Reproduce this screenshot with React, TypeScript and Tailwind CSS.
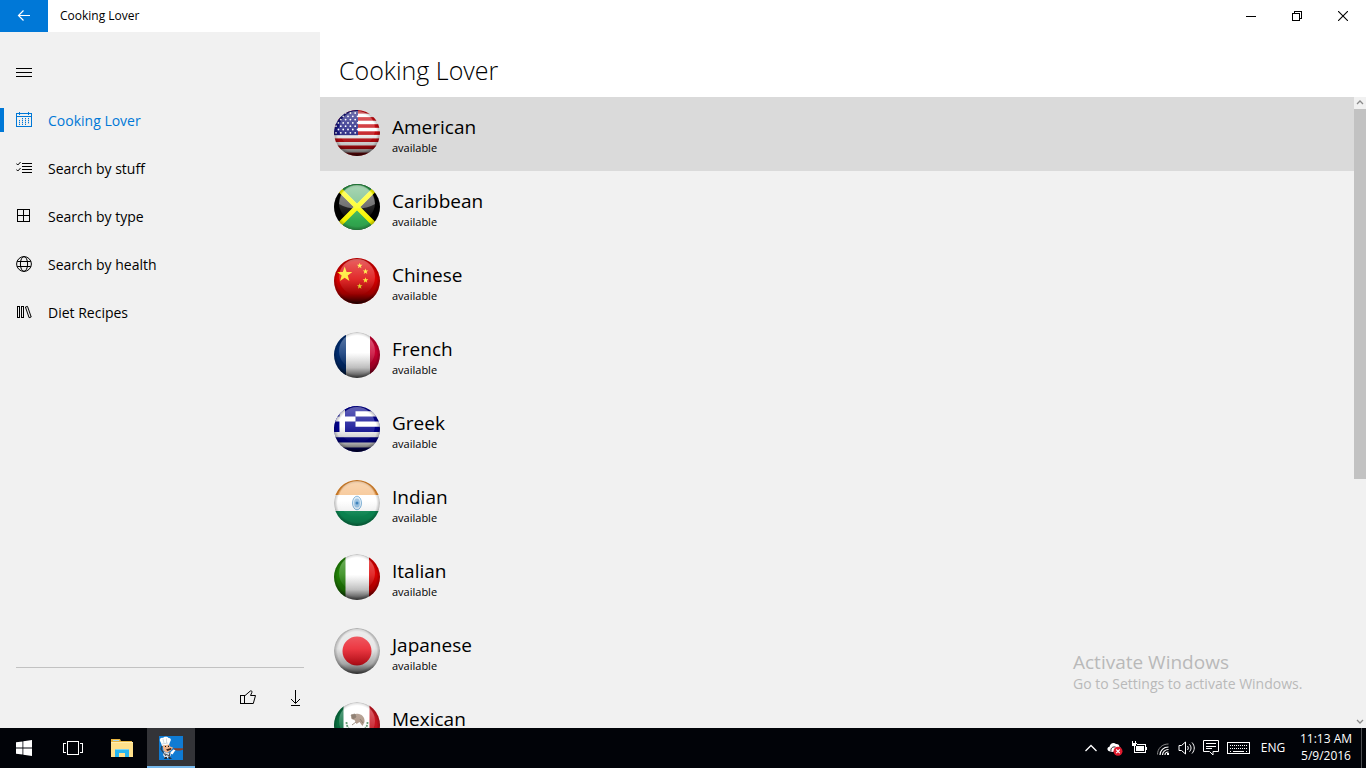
import React, { useState } from 'react';

const navItems = [
  { id: 'home', label: 'Cooking Lover', icon: CalendarIcon },
  { id: 'stuff', label: 'Search by stuff', icon: ChecklistIcon },
  { id: 'type', label: 'Search by type', icon: GridIcon },
  { id: 'health', label: 'Search by health', icon: GlobeIcon },
  { id: 'diet', label: 'Diet Recipes', icon: BooksIcon },
];

const cuisines = [
  { name: 'American', status: 'available', flag: UsaFlag },
  { name: 'Caribbean', status: 'available', flag: JamaicaFlag },
  { name: 'Chinese', status: 'available', flag: ChinaFlag },
  { name: 'French', status: 'available', flag: FranceFlag },
  { name: 'Greek', status: 'available', flag: GreeceFlag },
  { name: 'Indian', status: 'available', flag: IndiaFlag },
  { name: 'Italian', status: 'available', flag: ItalyFlag },
  { name: 'Japanese', status: 'available', flag: JapanFlag },
  { name: 'Mexican', status: 'available', flag: MexicoFlag },
];

/* ---------- Sidebar icons ---------- */

function CalendarIcon() {
  return (
    <svg className="w-4 h-4" viewBox="0 0 16 16" fill="none" stroke="currentColor" shapeRendering="crispEdges">
      <path d="M.5 1.5h15v13H.5zM.5 4.5h15M3.5 0v3M12.5 0v3" />
      <path d="M6 6.5h7M3 8.5h10M3 10.5h10M3 12.5h7" strokeDasharray="1 2" />
      <path d="M6 7.5h7M3 9.5h10M3 11.5h10" strokeDasharray="1 2" opacity="0.3" />
    </svg>
  );
}

function ChecklistIcon() {
  return (
    <svg className="w-4 h-4" viewBox="0 0 16 16" fill="none" stroke="currentColor">
      <path d="M6 3.5h10M6 6.5h10M6 9.5h10M6 12.5h10" shapeRendering="crispEdges" />
      <path d="M.3 3.5l1.5 1.500L4.600 2M.3 9.500l1.500 1.500L4.600 8" />
    </svg>
  );
}

function GridIcon() {
  return (
    <svg className="w-4 h-4" viewBox="0 0 16 16" fill="none" stroke="currentColor" shapeRendering="crispEdges">
      <path d="M1.5 1.5h12v12h-12zM7.5 1.5v12M1.5 7.5h12" />
    </svg>
  );
}

function GlobeIcon() {
  return (
    <svg className="w-4 h-4" viewBox="0 0 16 16" fill="none" stroke="currentColor">
      <circle cx="8" cy="8" r="7.4" />
      <ellipse cx="8" cy="8" rx="3.6" ry="7.4" />
      <path d="M1.2 5.5h13.6M1.2 10.5h13.6" />
    </svg>
  );
}

function BooksIcon() {
  return (
    <svg className="w-4 h-4" viewBox="0 0 16 16" fill="none" stroke="currentColor">
      <path d="M1.5 2.5h2v11h-2zM5.5 2.5h2v11h-2z" shapeRendering="crispEdges" />
      <path d="M9.4 3l2.1-.6 3.7 10.6-2.1.7z" />
    </svg>
  );
}

/* ---------- Flags ---------- */

function FlagBall({ id, shade = 0.75, children }: { id: string; shade?: number; children: React.ReactNode }) {
  return (
    <svg className="w-[46px] h-[46px] shrink-0" viewBox="0 0 46 46" aria-hidden="true">
      <defs>
        <clipPath id={`${id}-clip`}>
          <circle cx="23" cy="23" r="23" />
        </clipPath>
        <linearGradient id={`${id}-dark`} x1="0" y1="0" x2="0" y2="1">
          <stop offset="0.45" stopColor="#000" stopOpacity="0" />
          <stop offset="0.78" stopColor="#000" stopOpacity={shade * 0.35} />
          <stop offset="1" stopColor="#000" stopOpacity={shade} />
        </linearGradient>
        <radialGradient id={`${id}-edge`}>
          <stop offset="0.84" stopColor="#000" stopOpacity="0" />
          <stop offset="1" stopColor="#000" stopOpacity="0.26" />
        </radialGradient>
        <linearGradient id={`${id}-gloss`} x1="0" y1="0" x2="0" y2="1">
          <stop offset="0" stopColor="#fff" stopOpacity="0.38" />
          <stop offset="1" stopColor="#fff" stopOpacity="0" />
        </linearGradient>
      </defs>
      <g clipPath={`url(#${id}-clip)`}>
        {children}
        <rect width="46" height="46" fill={`url(#${id}-dark)`} />
        <circle cx="23" cy="23" r="23" fill={`url(#${id}-edge)`} />
        <ellipse cx="23" cy="19" rx="18" ry="18" fill={`url(#${id}-gloss)`} />
      </g>
    </svg>
  );
}

// Five-pointed star centred on cx, cy
function star(cx: number, cy: number, r: number) {
  return Array.from({ length: 10 }, (_, i) => {
    const radius = i % 2 === 0 ? r : r * 0.4;
    const angle = (Math.PI / 5) * i - Math.PI / 2;
    return `${(cx + radius * Math.cos(angle)).toFixed(2)},${(cy + radius * Math.sin(angle)).toFixed(2)}`;
  }).join(' ');
}

function UsaFlag() {
  return (
    <FlagBall id="usa">
      <rect width="46" height="46" fill="#fff" />
      {[0, 1, 2, 3, 4, 5, 6].map((i) => (
        <rect key={i} y={i * 7.1} width="46" height="3.6" fill="#c80a10" />
      ))}
      <rect width="24" height="25.2" fill="#16167c" />
      {[0, 1, 2, 3, 4, 5, 6].map((row) =>
        [0, 1, 2, 3, 4].map((col) => (
          <circle key={`${row}-${col}`} cx={2 + col * 4.8 + (row % 2) * 2.4} cy={3 + row * 3.3} r="0.9" fill="#fff" />
        ))
      )}
    </FlagBall>
  );
}

function JamaicaFlag() {
  return (
    <FlagBall id="jamaica" shade={0.15}>
      <rect width="46" height="46" fill="#000" />
      <path d="M0 0h46L23 23z" fill="#2a9a47" />
      <path d="M0 46h46L23 23z" fill="#35b455" />
      <path d="M3 3l40 40M43 3L3 43" stroke="#ff0" strokeWidth="4.6" />
      <path d="M5 20C6 8 14 1.500 23 1.500s17 6.500 18 18.500c-10 6-26 6-36 0z" fill="#fff" fillOpacity="0.35" />
      <path d="M6 6l34 34M40 6L6 40" stroke="#ff0" strokeWidth="4" strokeOpacity="0.7" />
    </FlagBall>
  );
}

function ChinaFlag() {
  return (
    <FlagBall id="china" shade={0.85}>
      <rect width="46" height="46" fill="#dc0000" />
      <polygon points={star(10.7, 16.5, 8)} fill="#ffe81c" />
      <polygon points={star(25.7, 7.8, 3)} fill="#ffe81c" />
      <polygon points={star(31.5, 13.5, 3)} fill="#ffe81c" />
      <polygon points={star(31.5, 22.3, 3)} fill="#ffe81c" />
      <polygon points={star(25.7, 28.2, 3)} fill="#ffe81c" />
    </FlagBall>
  );
}

function FranceFlag() {
  return (
    <FlagBall id="france">
      <rect width="46" height="46" fill="#fff" />
      <rect width="12" height="46" fill="#002d72" />
      <rect x="36" width="10" height="46" fill="#c8002f" />
    </FlagBall>
  );
}

function GreeceFlag() {
  return (
    <FlagBall id="greece">
      <rect width="46" height="46" fill="#00008f" />
      <path d="M0 5.2h46v5.2H0zM0 15.6h46v5.2H0zM0 26h46v5.2H0zM0 36.4h46v5.2H0z" fill="#fff" />
      <rect width="21.5" height="26" fill="#00008f" />
      <path d="M0 10.4h21.5v5.2H0zM5.5 0H11v26H5.5z" fill="#fff" />
    </FlagBall>
  );
}

function IndiaFlag() {
  return (
    <FlagBall id="india" shade={0.25}>
      <rect width="46" height="46" fill="#fff" />
      <rect width="46" height="15" fill="#ee9030" />
      <path d="M4 15C7 5 15 1.5 23 1.5S39 5 42 15z" fill="#fff" fillOpacity="0.4" />
      <rect y="31" width="46" height="15" fill="#0c8c55" />
      <ellipse cx="23" cy="23" rx="4.5" ry="6.8" fill="#d9e9f5" stroke="#4f94c8" strokeWidth="0.8" />
      <ellipse cx="23" cy="23" rx="2.9" ry="4.6" fill="#8ab9de" />
      <circle cx="23" cy="23" r="1.5" fill="#1f6fb2" />
    </FlagBall>
  );
}

function ItalyFlag() {
  return (
    <FlagBall id="italy">
      <rect width="46" height="46" fill="#fff" />
      <rect width="11.5" height="46" fill="#218306" />
      <rect x="35" width="11" height="46" fill="#dc0000" />
    </FlagBall>
  );
}

function JapanFlag() {
  return (
    <FlagBall id="japan">
      <rect width="46" height="46" fill="#e2e2e2" />
      <circle cx="23" cy="23" r="14.5" fill="#e8101c" />
    </FlagBall>
  );
}

function MexicoFlag() {
  return (
    <FlagBall id="mexico" shade={0.3}>
      <rect width="46" height="46" fill="#fff" />
      <rect width="9.5" height="46" fill="#087040" />
      <rect x="35.5" width="11" height="46" fill="#c81420" />
      <path d="M17 15c2-3 5-4 8-3 4 1 6 4 5.500 8l-2 4-3-4-3 2-2-4-3-1z" fill="#a08674" />
      <path d="M17 13l4-1 1 3-3 2zM26 17l3 4M22 20l-4 3" fill="#6d5a4a" stroke="#6d5a4a" strokeWidth="0.8" />
      <path d="M12.500 20c0 6 4 9.500 10.500 9.500S33.500 26 33.500 20" fill="none" stroke="#4e8a5e" strokeWidth="1.800" strokeDasharray="2 1" />
    </FlagBall>
  );
}

/* ---------- Window ---------- */

function TitleBar() {
  return (
    <header className="flex h-8 shrink-0 items-center bg-white">
      <button type="button" aria-label="Back" className="flex h-8 w-12 items-center justify-center bg-[#0078d7] text-white">
        <svg className="w-4 h-4" viewBox="0 0 16 16" fill="none" stroke="currentColor" strokeWidth="1.2">
          <path d="M14 7.500H2.500M7.500 2.500l-5 5 5 5" />
        </svg>
      </button>
      <span className="ml-3 text-[12px] leading-4">Cooking Lover</span>
      <div className="ml-auto flex">
        <button type="button" aria-label="Minimize" className="flex h-8 w-[46px] items-center justify-center">
          <svg className="w-[10px] h-[10px]" viewBox="0 0 10 10" stroke="currentColor" shapeRendering="crispEdges">
            <path d="M0 5.500h10" />
          </svg>
        </button>
        <button type="button" aria-label="Restore" className="flex h-8 w-[46px] items-center justify-center">
          <svg className="w-[10px] h-[10px]" viewBox="0 0 10 10" fill="none" stroke="currentColor" shapeRendering="crispEdges">
            <path d="M.5 2.500h7v7h-7zM2.500 2.500v-2h7v7h-2" />
          </svg>
        </button>
        <button type="button" aria-label="Close" className="flex h-8 w-[46px] items-center justify-center">
          <svg className="w-[10px] h-[10px]" viewBox="0 0 10 10" stroke="currentColor" strokeWidth="1.1">
            <path d="M0 0l10 10M10 0L0 10" />
          </svg>
        </button>
      </div>
    </header>
  );
}

function Sidebar() {
  const [active, setActive] = useState('home');

  return (
    <aside className="flex w-80 shrink-0 flex-col bg-[#f1f1f1] pt-4">
      <button type="button" aria-label="Menu" className="flex h-12 w-12 items-center justify-center">
        <svg className="w-4 h-4" viewBox="0 0 16 16" stroke="currentColor" shapeRendering="crispEdges">
          <path d="M0 4.500h16M0 8.500h16M0 12.500h16" />
        </svg>
      </button>
      <nav>
        {navItems.map(({ id, label, icon: Icon }) => (
          <a
            key={id}
            href={`#${id}`}
            onClick={() => setActive(id)}
            className={`relative flex h-12 items-center gap-4 px-4 text-[14px] ${active === id ? 'text-[#0078d7]' : 'text-black'}`}
          >
            {active === id && <span className="absolute left-0 h-6 w-1 bg-[#0078d7]" />}
            <Icon />
            <span>{label}</span>
          </a>
        ))}
      </nav>
      <div className="mx-4 mt-auto flex h-[61px] items-center justify-end border-t border-[#c2c2c2]">
        <button type="button" aria-label="Like" className="flex h-12 w-12 items-center justify-center">
          <svg className="w-4 h-4" viewBox="0 0 16 16" fill="none" stroke="currentColor">
            <path d="M.5 5.500h4v8h-4z" shapeRendering="crispEdges" />
            <path d="M4.500 6l5.800-5c1.400-.6 2 .4 1.500 1.700L10.500 5.500h5L13.300 13.500H4.500" />
          </svg>
        </button>
        <button type="button" aria-label="Download" className="-mr-4 flex h-12 w-12 items-center justify-center">
          <svg className="w-4 h-4" viewBox="0 0 16 16" fill="none" stroke="currentColor">
            <path d="M7.500 0v13M3 15.500h9" shapeRendering="crispEdges" />
            <path d="M3 9l4.500 4.500L12 9" />
          </svg>
        </button>
      </div>
    </aside>
  );
}

function ScrollBar() {
  return (
    <div className="flex w-3 shrink-0 flex-col text-[#8a8a8a]" aria-hidden="true">
      <svg className="h-3 w-3 shrink-0" viewBox="0 0 12 12" fill="none" stroke="currentColor" strokeWidth="1.300">
        <path d="M3 7l3-3 3 3" />
      </svg>
      <div className="min-h-0 flex-1">
        <div className="h-[61%] bg-[#c2c2c2]" />
      </div>
      <svg className="h-3 w-3 shrink-0" viewBox="0 0 12 12" fill="none" stroke="currentColor" strokeWidth="1.300">
        <path d="M3 4l3 3 3-3" />
      </svg>
    </div>
  );
}

function CuisineList() {
  const [selected, setSelected] = useState('American');

  return (
    <div className="flex min-h-0 flex-1 bg-[#f1f1f1]">
      <ul className="min-w-0 flex-1 overflow-y-auto [scrollbar-width:none]">
        {cuisines.map(({ name, status, flag: Flag }) => (
          <li key={name}>
            <button
              type="button"
              onClick={() => setSelected(name)}
              className={`flex h-[74px] w-full items-center gap-3 px-[14px] pb-0.5 text-left ${selected === name ? 'bg-[#dadada]' : ''}`}
            >
              <Flag />
              <span className="flex flex-col pt-1.5">
                <span className="text-[19px] leading-6">{name}</span>
                <span className="text-[11px] leading-[18px]">{status}</span>
              </span>
            </button>
          </li>
        ))}
      </ul>
      <ScrollBar />
    </div>
  );
}

/* ---------- Taskbar ---------- */

function ChefIcon() {
  return (
    <svg className="w-6 h-6" viewBox="0 0 24 24">
      <rect width="24" height="24" fill="#0f7bd3" />
      <path d="M1 5c-1-3 2-4 3-3 1-2 5-1.500 5.500 0 2.500-.5 3 2 1.500 4L10 9 3 10 2 7z" fill="#fff" />
      <path d="M3 8l6-1M4 3l1 4M7.500 2.500V7" stroke="#bcc8d4" strokeWidth="0.7" />
      <path d="M3.500 9.500L10 8.500l1 2 3 1-1.500 2.500-4.500 3-3.500-2z" fill="#eeb38c" />
      <path d="M6 10.500h1M9 10.300h1" stroke="#111" strokeWidth="1.200" />
      <path d="M7 13.500l5-1.500.5 1.500-4 1.500z" fill="#3b2218" />
      <path d="M3 10l-1 3 2 3" fill="none" stroke="#333b46" strokeWidth="1.200" />
      <path d="M5 16l4 1 2-1 1 3-2 3H6l-2-3z" fill="#d8dde3" />
      <path d="M10.500 17l4-3.500 2 .5-3 4.500z" fill="#fff" />
      <path d="M4 16l3 4M11 16l-1 5M6 18l5 2" fill="none" stroke="#333b46" strokeWidth="0.900" />
      <path d="M14 12.300h10v1.500c-2 1-6 1-8 .2z" fill="#8b3f24" />
      <path d="M6 21l-1 2h3v-2M9 21l1 2h3l-2-2" fill="#272c35" />
    </svg>
  );
}

function Taskbar() {
  return (
    <footer className="flex h-10 shrink-0 items-center bg-[#010308] text-white">
      <div className="flex h-10 gap-px">
        <button type="button" aria-label="Start" className="flex w-12 items-center justify-center">
          <svg className="w-4 h-4" viewBox="0 0 16 16" fill="currentColor">
            <path d="M0 2.300L6.500 1.400v6.100H0zM7.300 1.300L16 0v7.500H7.300zM0 8.400h6.500v6.200L0 13.700zM7.300 8.400H16V16l-8.700-1.300z" />
          </svg>
        </button>
        <button type="button" aria-label="Task View" className="flex w-12 items-center justify-center">
          <svg className="w-5 h-4" viewBox="0 0 20 16" fill="none" stroke="currentColor" shapeRendering="crispEdges">
            <path d="M4.500 1.500h11v13h-11zM3 3.500H.5v9H3M17 3.500h2.500v9H17" />
          </svg>
        </button>
        <button type="button" aria-label="File Explorer" className="flex w-12 items-center justify-center">
          <svg className="w-[22px] h-[18px]" viewBox="0 0 22 18">
            <path d="M0 0h9l1 2h11v4H0z" fill="#e7b541" />
            <path d="M2 1h6v1H2z" fill="#a8d7ec" />
            <path d="M0 3h22v15H0z" fill="#ffe08a" />
            <path d="M0 3h22v1H0z" fill="#ffeeb2" />
            <path d="M5 10h12l1 1v7h-4v-4H8v4H4v-7z" fill="#27b7ef" />
            <path d="M5 10h12l1 1H4z" fill="#7bd6f7" />
          </svg>
        </button>
        <button
          type="button"
          aria-label="Cooking Lover"
          className="flex w-12 items-center justify-center border-y-2 border-t-[#333438] border-b-[#76b9ed] bg-[#333438]"
        >
          <ChefIcon />
        </button>
      </div>

      <div className="ml-auto flex h-10 items-center">
        <button type="button" aria-label="Show hidden icons" className="flex h-10 w-6 items-center justify-center">
          <svg className="w-4 h-4" viewBox="0 0 16 16" fill="none" stroke="currentColor" strokeWidth="1.300">
            <path d="M2.500 11L8 5.500l5.500 5.500" />
          </svg>
        </button>
        <button type="button" aria-label="OneDrive" className="flex h-10 w-6 items-center justify-center">
          <svg className="w-4 h-4" viewBox="0 0 16 16">
            <path d="M1.500 11c-2-1.500-1-4 1-4.200C3 3.500 6.500 1.500 9 4c2-.3 3.500 1 3.500 3 1.500.5 1.500 2 1 3.500L5 12z" fill="#fff" />
            <path d="M4 11.500c-.5-3 1-5 4.500-4.500" fill="none" stroke="#010308" strokeWidth="0.900" />
            <circle cx="11" cy="11.300" r="4.500" fill="#e01b2e" />
            <path d="M9.200 9.500l3.600 3.600M12.800 9.500l-3.600 3.600" stroke="#fff" strokeWidth="1.100" />
          </svg>
        </button>
        <button type="button" aria-label="Battery" className="flex h-10 w-6 items-center justify-center">
          <svg className="w-4 h-4" viewBox="0 0 16 16" fill="none" stroke="currentColor" shapeRendering="crispEdges">
            <path d="M1.500 1v2M4.500 1v2M.5 3.500h5M1.500 4.500h3v1h-3zM3.500 6v6.500h11v-8H6M15.500 7v3" />
            <path d="M5 6h8v5H5z" fill="currentColor" stroke="none" />
          </svg>
        </button>
        <button type="button" aria-label="Network" className="flex h-10 w-6 items-center justify-center">
          <svg className="w-4 h-4" viewBox="0 0 16 16" fill="none" stroke="currentColor">
            <path d="M2.500 14.500C2.500 8.500 7 4 13.500 4" stroke="#888" />
            <path d="M5 15c0-4.500 3.500-8 8.500-8M7.500 15c0-3 2.500-5.500 6-5.500M10 15c0-2 1.500-3 3.500-3" strokeWidth="1.200" />
            <path d="M12 13h2v2h-2z" fill="currentColor" stroke="none" />
          </svg>
        </button>
        <button type="button" aria-label="Volume" className="flex h-10 w-6 items-center justify-center">
          <svg className="w-[18px] h-4" viewBox="0 0 18 16" fill="none" stroke="currentColor">
            <path d="M1 5.500h2.500L7.500 2v12l-4-3.500H1z" />
            <path d="M9.500 6c1 1.300 1 2.700 0 4M11.500 4.300c2 2.300 2 5.100 0 7.400M14 2.500c3 3.500 3 7.500 0 11" />
          </svg>
        </button>
        <button type="button" aria-label="Action Center" className="flex h-10 w-6 items-center justify-center">
          <svg className="w-4 h-4" viewBox="0 0 16 16" fill="none" stroke="currentColor">
            <path d="M.5.5h15v11H10v3.500L6.500 11.500h-6zM3 3.500h10M3 6.500h10M3 8.500h6" />
          </svg>
        </button>
        <button type="button" aria-label="Touch keyboard" className="flex h-10 w-8 items-center justify-center">
          <svg className="w-6 h-4" viewBox="0 0 24 16" fill="none" stroke="currentColor" shapeRendering="crispEdges">
            <path d="M.5 2.500h22v11H.5z" />
            <path d="M3 5.500h17M3 8.500h17" strokeDasharray="1 1" />
            <path d="M3 11.500h1M6 11.500h11M19 11.500h1" />
          </svg>
        </button>
        <button type="button" className="h-10 w-9 text-[12px]">ENG</button>
        <button type="button" className="flex h-10 w-[70px] flex-col items-center justify-center pb-0.5 text-[12px] leading-[17px]">
          <span>11:13 AM</span>
          <span>5/9/2016</span>
        </button>
        <button type="button" aria-label="Show desktop" className="h-10 w-[5px] border-l border-[#4a4c50]" />
      </div>
    </footer>
  );
}

export default function App() {
  return (
    <div className="flex h-screen flex-col overflow-hidden bg-white font-['Open_Sans','Noto_Sans',sans-serif] text-black">
      <TitleBar />
      <div className="relative flex min-h-0 flex-1">
        <Sidebar />
        <main className="flex min-w-0 flex-1 flex-col">
          <h1 className="flex h-[65px] shrink-0 items-end px-[19px] pb-[9px] text-[25px] leading-9 font-light">Cooking Lover</h1>
          <CuisineList />
        </main>
        <div className="pointer-events-none absolute right-[57px] bottom-[34px] w-[236px] text-[#b9b9b9]">
          <p className="text-[19px] leading-6">Activate Windows</p>
          <p className="text-[14px] leading-5">Go to Settings to activate Windows.</p>
        </div>
      </div>
      <Taskbar />
    </div>
  );
}
